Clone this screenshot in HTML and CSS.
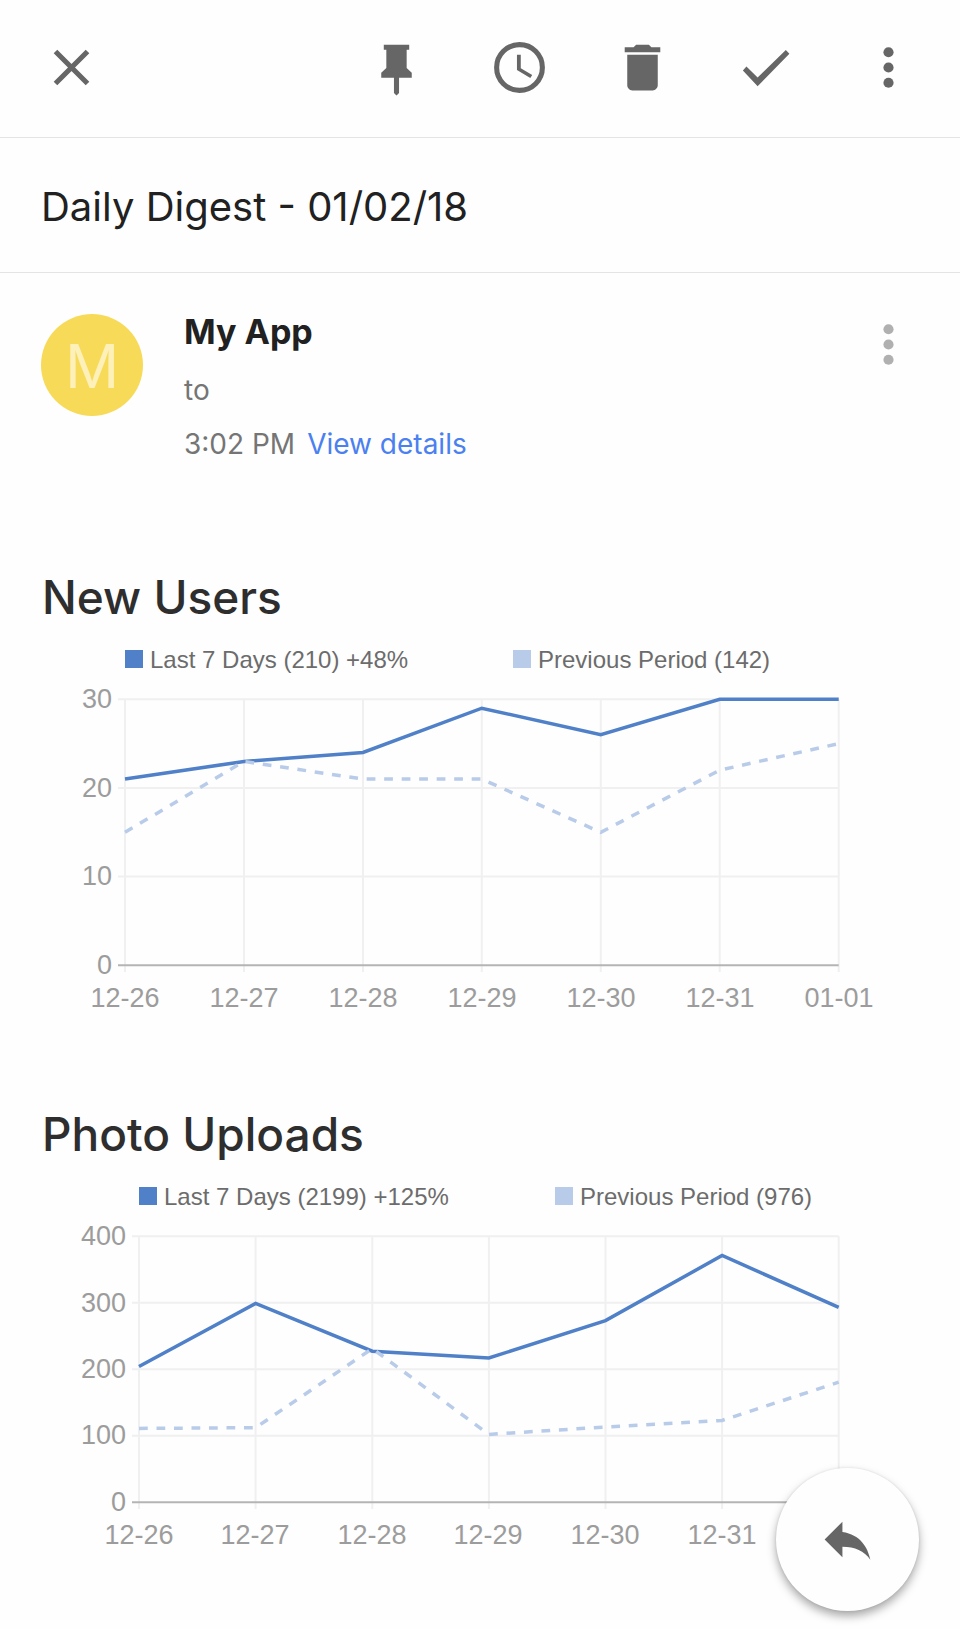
FILE: index.html
```html
<!DOCTYPE html>
<html lang="en">
<head>
<meta charset="utf-8">
<meta name="viewport" content="width=device-width, initial-scale=1">
<title>Daily Digest - 01/02/18</title>
<link rel="stylesheet" href="styles.css">
</head>
<body>
<header class="toolbar">
  <button class="icon-button" type="button" aria-label="Close">
    <svg class="icon" viewBox="0 0 24 24"><path d="M5.7 5.7l12.6 12.6M18.3 5.7L5.7 18.3" fill="none" stroke="currentColor" stroke-width="2"/></svg>
  </button>
  <div class="toolbar-actions">
    <button class="icon-button" type="button" aria-label="Pin">
      <svg class="icon" viewBox="0 0 24 24"><path d="M7 3h10v2h-1v7.2l2 1.9V16h-5v6l-1 1-1-1v-6H6v-1.9l2-1.9V5H7z"/></svg>
    </button>
    <button class="icon-button" type="button" aria-label="Snooze">
      <svg class="icon" viewBox="0 0 24 24"><circle cx="12" cy="12" r="9" fill="none" stroke="currentColor" stroke-width="2"/><path d="M12.5 7H11v6l5.25 3.15.75-1.23-4.5-2.67z"/></svg>
    </button>
    <button class="icon-button" type="button" aria-label="Delete">
      <svg class="icon" viewBox="0 0 24 24"><path d="M6 19c0 1.1.9 2 2 2h8c1.1 0 2-.9 2-2V7H6v12zM19 4h-3.5l-1-1h-5l-1 1H5v2h14V4z"/></svg>
    </button>
    <button class="icon-button" type="button" aria-label="Mark done">
      <svg class="icon" viewBox="0 0 24 24"><path d="M8.9 15.9L4.5 11.6 3.1 13.2 8.9 19.4 21.4 6.6 20 5.1z"/></svg>
    </button>
    <button class="icon-button" type="button" aria-label="More options">
      <svg class="icon" viewBox="0 0 24 24"><circle cx="12" cy="6" r="2"/><circle cx="12" cy="12" r="2"/><circle cx="12" cy="18" r="2"/></svg>
    </button>
  </div>
</header>

<main>
  <h1 class="subject">Daily Digest - 01/02/18</h1>

  <section class="sender">
    <div class="avatar" aria-hidden="true">M</div>
    <div class="sender-info">
      <h2 class="sender-name">My App</h2>
      <p class="sender-line">to</p>
      <p class="sender-line"><span>3:02 PM</span><a class="details-link" href="#details">View details</a></p>
    </div>
    <button class="icon-button icon-button-light" type="button" aria-label="Message options">
      <svg class="icon" viewBox="0 0 24 24"><circle cx="12" cy="6" r="2"/><circle cx="12" cy="12" r="2"/><circle cx="12" cy="18" r="2"/></svg>
    </button>
  </section>

  <section class="report">
    <h2 class="report-title">New Users</h2>
    <svg class="chart" viewBox="0 0 876 400" role="img" aria-label="New users, last 7 days and previous period">
      <rect class="fill-current" x="83" y="10" width="18" height="18"/>
      <text class="legend" x="108" y="28">Last 7 Days (210) +48%</text>
      <rect class="fill-previous" x="471" y="10" width="18" height="18"/>
      <text class="legend" x="496" y="28">Previous Period (142)</text>
      <path class="grid" d="M76 59.3H796.7M76 148H796.7M76 236.6H796.7M83 59.3V332M202 59.3V332M321 59.3V332M439.8 59.3V332M558.8 59.3V332M677.7 59.3V332M796.7 59.3V332"/>
      <path class="axis" d="M76 325.3H796.7"/>
      <g class="tick tick-y">
        <text x="70" y="68">30</text>
        <text x="70" y="157">20</text>
        <text x="70" y="245">10</text>
        <text x="70" y="334">0</text>
      </g>
      <g class="tick tick-x">
        <text x="83" y="367">12-26</text>
        <text x="202" y="367">12-27</text>
        <text x="321" y="367">12-28</text>
        <text x="440" y="367">12-29</text>
        <text x="559" y="367">12-30</text>
        <text x="678" y="367">12-31</text>
        <text x="797" y="367">01-01</text>
      </g>
      <polyline class="line-current" points="83,139.1 202,121.4 321,112.5 439.8,68.2 558.8,94.8 677.7,59.3 796.7,59.3"/>
      <polyline class="line-previous" points="83,192.3 202,121.4 321,139.1 439.8,139.1 558.8,192.3 677.7,130.2 796.7,103.6"/>
    </svg>
  </section>

  <section class="report">
    <h2 class="report-title">Photo Uploads</h2>
    <svg class="chart" viewBox="0 0 876 400" role="img" aria-label="Photo uploads, last 7 days and previous period">
      <rect class="fill-current" x="97" y="10" width="18" height="18"/>
      <text class="legend" x="122" y="28">Last 7 Days (2199) +125%</text>
      <rect class="fill-previous" x="513" y="10" width="18" height="18"/>
      <text class="legend" x="538" y="28">Previous Period (976)</text>
      <path class="grid" d="M90 59.3H796.7M90 125.7H796.7M90 192.2H796.7M90 258.7H796.7M97 59.3V332M213.6 59.3V332M330.3 59.3V332M446.9 59.3V332M563.5 59.3V332M680.1 59.3V332M796.7 59.3V332"/>
      <path class="axis" d="M90 325.2H796.7"/>
      <g class="tick tick-y">
        <text x="84" y="68">400</text>
        <text x="84" y="135">300</text>
        <text x="84" y="201">200</text>
        <text x="84" y="267">100</text>
        <text x="84" y="334">0</text>
      </g>
      <g class="tick tick-x">
        <text x="97" y="367">12-26</text>
        <text x="213" y="367">12-27</text>
        <text x="330" y="367">12-28</text>
        <text x="446" y="367">12-29</text>
        <text x="563" y="367">12-30</text>
        <text x="680" y="367">12-31</text>
      </g>
      <polyline class="line-current" points="97,189.5 213.6,126.4 330.3,174.2 446.9,181 563.5,143.6 680.1,78.5 796.7,130.3"/>
      <polyline class="line-previous" points="97,251.4 213.6,250.7 330.3,171.6 446.9,257.4 563.5,250 680.1,243.4 796.7,205.2"/>
    </svg>
  </section>
</main>

<button class="reply-button" type="button" aria-label="Reply">
  <svg class="icon" viewBox="0 0 24 24"><path d="M10 9V5l-7 7 7 7v-4.1c5 0 8.5 1.6 11 5.1-1-5-4-10-11-11z"/></svg>
</button>
</body>
</html>
```

FILE: styles.css
```css
* {
  box-sizing: border-box;
}

body {
  margin: 0;
  background: #fefefe;
  color: #212121;
  font-family: Inter, "Liberation Sans", sans-serif;
}

h1,
h2,
p {
  margin: 0;
}

.toolbar {
  display: flex;
  justify-content: space-between;
  padding: 37px 41px 39px;
  border-bottom: 1px solid #e4e4e4;
}

.toolbar-actions {
  display: flex;
  gap: 62px;
}

.icon-button {
  flex: none;
  width: 61px;
  height: 61px;
  padding: 0;
  border: 0;
  background: none;
  color: #666;
  cursor: pointer;
}

.icon-button-light {
  color: #b0b0b0;
}

.icon {
  display: block;
  width: 61px;
  height: 61px;
  fill: currentColor;
}

.subject {
  padding: 44px 41px 40px;
  border-bottom: 1px solid #e4e4e4;
  font-size: 40px;
  font-weight: 400;
  line-height: 50px;
}

.sender {
  display: flex;
  align-items: flex-start;
  padding: 41px 41px 0;
}

.avatar {
  flex: none;
  width: 102px;
  height: 102px;
  border-radius: 50%;
  background: #f7da58;
  color: #fdf0b8;
  font-size: 60px;
  line-height: 104px;
  text-align: center;
}

.sender-info {
  flex: 1;
  padding-left: 41px;
}

.sender-name {
  font-size: 34px;
  font-weight: 700;
  line-height: 35px;
}

.sender-line {
  display: flex;
  gap: 12px;
  font-size: 28px;
  line-height: 54px;
  color: #757575;
}

.sender-name + .sender-line {
  margin-top: 14px;
}

.details-link {
  color: #4a80f0;
  text-decoration: none;
}

.report {
  padding: 64px 42px 0;
}

.sender + .report {
  padding-top: 96px;
}

.report-title {
  margin-bottom: 13px;
  color: #2e2e2e;
  font-size: 46px;
  font-weight: 500;
  line-height: 60px;
}

.chart {
  display: block;
  width: 100%;
  height: auto;
  overflow: visible;
  font-family: "Liberation Sans", Arial, sans-serif;
}

.legend {
  fill: #6c6c6c;
  font-size: 24px;
}

.tick {
  fill: #9c9c9c;
  font-size: 27px;
}

.tick-y {
  text-anchor: end;
}

.tick-x {
  text-anchor: middle;
}

.fill-current {
  fill: #4f80c8;
}

.fill-previous {
  fill: #b8cbe9;
}

.grid {
  fill: none;
  stroke: #f0f0f0;
  stroke-width: 2;
}

.axis {
  fill: none;
  stroke: #b4b4b4;
  stroke-width: 2;
}

.line-current,
.line-previous {
  fill: none;
  stroke: #4f80c8;
  stroke-width: 3.5;
}

.line-previous {
  stroke: #b8cbe9;
  stroke-dasharray: 8.75;
}

.reply-button {
  position: fixed;
  right: 41px;
  bottom: 18px;
  display: grid;
  place-items: center;
  width: 143px;
  height: 143px;
  padding: 0;
  border: 0;
  border-radius: 50%;
  background: #fefefe;
  box-shadow: 0 5px 10px rgba(0, 0, 0, 0.34), 0 0 3px rgba(0, 0, 0, 0.1);
  color: #666;
  cursor: pointer;
}
```
